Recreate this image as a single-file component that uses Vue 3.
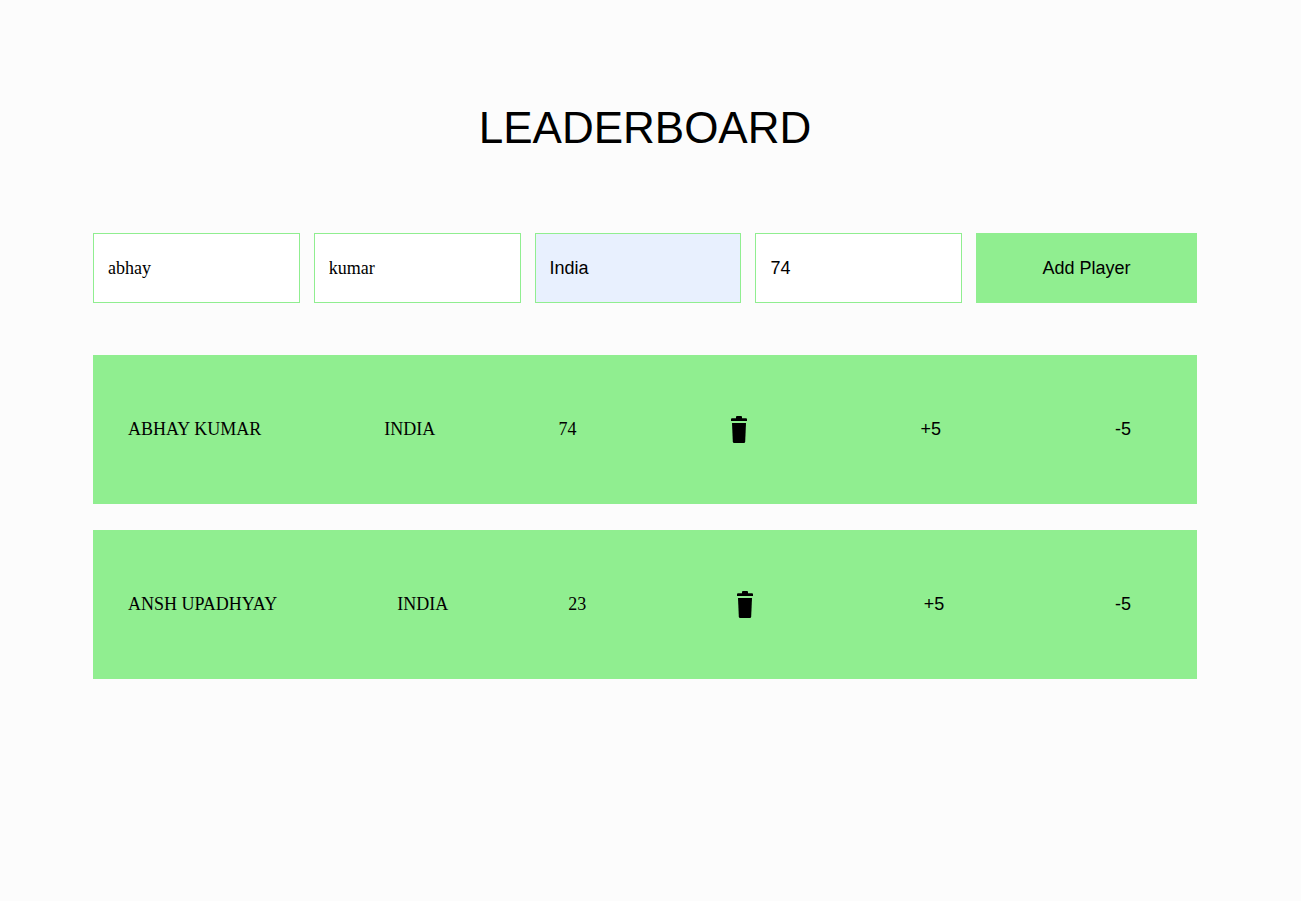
<script setup>
import { ref } from 'vue'

const form = ref({ first: 'abhay', last: 'kumar', country: 'India', score: '74' })

const players = ref([
  { id: 1, name: 'ABHAY KUMAR', country: 'INDIA', score: 74 },
  { id: 2, name: 'ANSH UPADHYAY', country: 'INDIA', score: 23 }
])

let nextId = 3

function addPlayer() {
  const { first, last, country, score } = form.value
  players.value.push({
    id: nextId++,
    name: `${first} ${last}`.toUpperCase(),
    country: country.toUpperCase(),
    score: Number(score)
  })
}

function removePlayer(id) {
  players.value = players.value.filter((player) => player.id !== id)
}
</script>

<template>
  <main class="page">
    <h1 class="title">LEADERBOARD</h1>

    <form class="entry" @submit.prevent="addPlayer">
      <input v-model="form.first" class="field serif" type="text" aria-label="First name" />
      <input v-model="form.last" class="field serif" type="text" aria-label="Last name" />
      <input v-model="form.country" class="field filled" type="text" aria-label="Country" />
      <input v-model="form.score" class="field" type="text" inputmode="numeric" aria-label="Score" />
      <button class="add" type="submit">Add Player</button>
    </form>

    <ul class="players">
      <li v-for="player in players" :key="player.id" class="player">
        <span>{{ player.name }}</span>
        <span>{{ player.country }}</span>
        <span>{{ player.score }}</span>
        <button class="action wide" type="button" aria-label="Delete player" @click="removePlayer(player.id)">
          <svg class="trash" viewBox="0 0 16 27" aria-hidden="true">
            <path d="M5 2.2V1Q5 0 6 0H10Q11 0 11 1V2.2H15Q16 2.2 16 3.2V5H0V3.2Q0 2.2 1 2.2Z" />
            <path d="M1 7H15L14.2 25.4Q14.1 27 12.8 27H3.2Q1.9 27 1.8 25.4Z" />
          </svg>
        </button>
        <button class="action" type="button" @click="player.score += 5">+5</button>
        <button class="action wide" type="button" @click="player.score -= 5">-5</button>
      </li>
    </ul>
  </main>
</template>

<style>
body {
  margin: 0;
  background: #fcfcfc;
}
</style>

<style scoped>
.page {
  padding: 88px 104px 64px 93px;
  color: #000;
  font-family: "Liberation Serif", "Times New Roman", serif;
  font-size: 18px;
}

.title {
  margin: 0 0 65px;
  font-family: "Liberation Sans", Arial, sans-serif;
  font-size: 44px;
  font-weight: 400;
  line-height: 80px;
  text-align: center;
}

.entry {
  display: grid;
  grid-template-columns: repeat(5, minmax(0, 1fr));
  margin-bottom: 52px;
}

.field {
  box-sizing: border-box;
  min-width: 0;
  height: 70px;
  margin: 0 14px 0 0;
  padding: 0 14px;
  border: 1px solid lightgreen;
  border-radius: 0;
  outline: none;
  background: #fff;
  color: #000;
  font-family: "Liberation Sans", Arial, sans-serif;
  font-size: 18px;
}

.serif {
  font-family: "Liberation Serif", "Times New Roman", serif;
}

.filled {
  background: #e8f0fe;
}

.add,
.action {
  margin: 0;
  padding: 0;
  border: 0;
  background: lightgreen;
  color: #000;
  font-family: "Liberation Sans", Arial, sans-serif;
  font-size: 18px;
  cursor: pointer;
}

.players {
  display: grid;
  gap: 26px;
  margin: 0;
  padding: 0;
  list-style: none;
}

.player {
  display: flex;
  align-items: center;
  justify-content: space-between;
  box-sizing: border-box;
  min-height: 149px;
  padding: 24px 35px;
  background: lightgreen;
}

.action {
  display: flex;
  align-items: center;
  justify-content: center;
  width: 60px;
  height: 56px;
}

.wide {
  width: 78px;
}

.trash {
  width: 16px;
  height: 27px;
  fill: #000;
}
</style>
